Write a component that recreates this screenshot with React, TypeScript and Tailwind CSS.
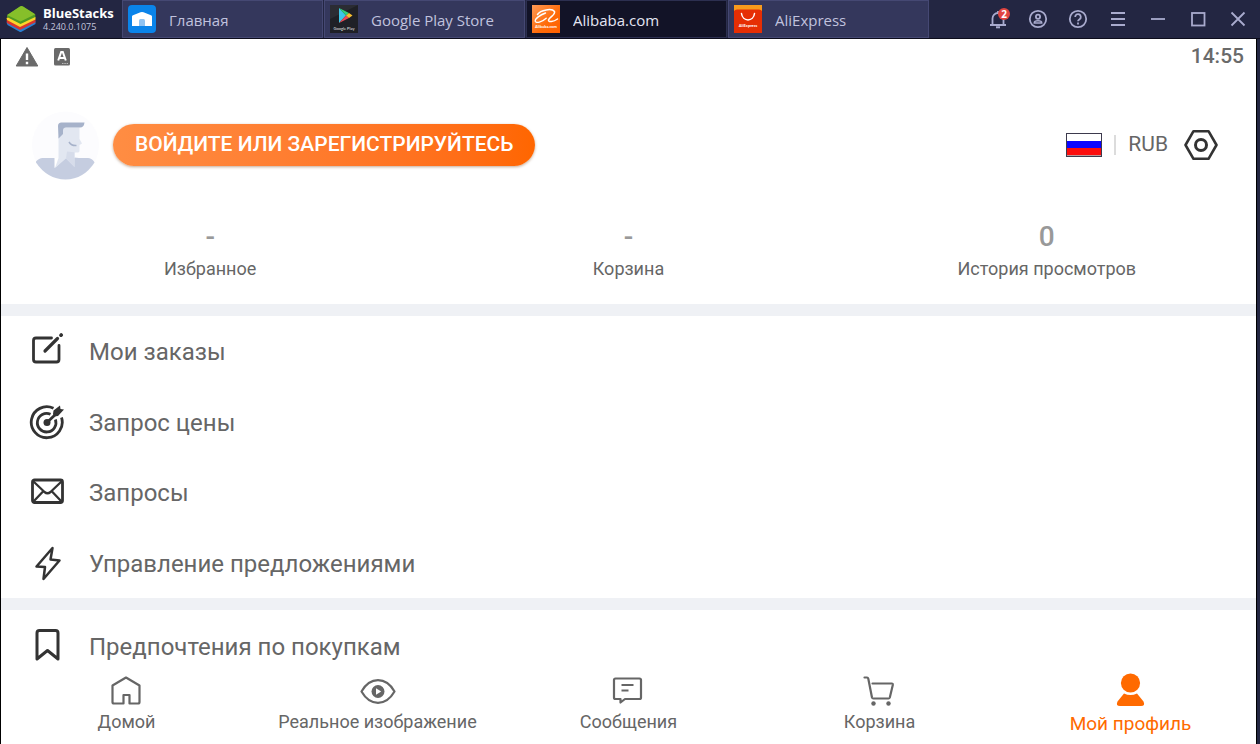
import React from "react";

type IconProps = { className?: string };

function BlueStacksLogo() {
  return (
    <svg viewBox="0 0 30 28" className="h-7 w-[30px] shrink-0" aria-hidden="true">
      <path d="M0.5 17.500 15 10l14.500 6.500v2.500L15.500 26.800q-1 .5-2 0L1.500 20z" fill="#2b7fd0" />
      <path d="M0.5 15.500 15 8l14.500 6.500v2.700L14 25 1 18z" fill="#d8352e" />
      <path d="M0.5 13 15 6l14.500 6v2.400L14 22 1 15z" fill="#fbd52c" />
      <path d="M1 10.500 14 1.500q1.500-.9 3 0L29.300 9.500v2.500L14.500 19 1 12z" fill="#4f9a22" />
      <path d="M1 10 14 1.500q1.500-.9 3 0L29.300 9.200 14.500 16.500z" fill="#86bf2a" />
    </svg>
  );
}

function HomeAppIcon() {
  return (
    <svg viewBox="0 0 28 28" className="size-7" aria-hidden="true">
      <rect width="28" height="28" rx="4" fill="#0a84ea" />
      <path d="M4 11.500Q4 10.500 5 10.200L12.500 7.300Q14 6.800 15.500 7.300L23 10.200Q24 10.500 24 11.500V21H4z" fill="#fff" />
      <path d="M11 15.500q0-1.500 1.500-1.500h3q1.500 0 1.500 1.500V21h-6z" fill="#8fc3f2" />
    </svg>
  );
}

function PlayAppIcon() {
  return (
    <svg viewBox="0 0 28 28" className="size-7" aria-hidden="true">
      <rect width="28" height="28" fill="#2b2c33" />
      <path d="M0 14 28 0v28H0z" fill="#1f2026" />
      <path d="M9 3v15l7-7.500z" fill="#3ec6e8" />
      <path d="M9 3l10 5-3 2.500z" fill="#33d17a" />
      <path d="M9 18l10-5-3-2.500z" fill="#ef4a55" />
      <path d="M19 8l3.500 2.500L19 13l-3-2.500z" fill="#fbc02d" />
      <text x="14" y="24.500" textAnchor="middle" fontSize="4" fill="#e5e5e5" fontFamily="Lato, sans-serif">Google Play</text>
    </svg>
  );
}

function AlibabaAppIcon() {
  return (
    <svg viewBox="0 0 28 28" className="size-7" aria-hidden="true">
      <defs>
        <linearGradient id="alibaba" x1="0" y1="0" x2="1" y2="1">
          <stop offset="0" stopColor="#ff9a55" />
          <stop offset="0.600" stopColor="#ff6a08" />
          <stop offset="1" stopColor="#ff6000" />
        </linearGradient>
      </defs>
      <rect width="28" height="28" fill="url(#alibaba)" />
      <path d="M5.500 9.500C8.500 4.800 20 3 22.500 6.500c1 3.500-4.500 5-6 8.500-.5 2.500 5 2 9-1" fill="none" stroke="#fff" strokeWidth="1.500" strokeLinecap="round" />
      <path d="M13.500 8C8 10 3 13.500 3.200 16.200c.5 2.500 7 .8 11-3" fill="none" stroke="#fff" strokeWidth="1.400" strokeLinecap="round" />
      <text x="14" y="23" textAnchor="middle" fontSize="4" fontWeight="700" fill="#fff" fontFamily="Lato, sans-serif">Alibaba.com</text>
    </svg>
  );
}

function AliExpressAppIcon() {
  return (
    <svg viewBox="0 0 28 28" className="size-7" aria-hidden="true">
      <rect width="28" height="28" fill="#e62e04" />
      <path d="M0 0h28v6q-1-1.500-3-1.500H3Q1 4.500 0 6z" fill="#f79a1d" />
      <path d="M7.500 8.500c1 8.500 12 8.500 13 0" fill="none" stroke="#fff" strokeWidth="1.500" strokeLinecap="round" />
      <text x="14" y="22" textAnchor="middle" fontSize="4" fontWeight="700" fill="#fff" fontFamily="Lato, sans-serif">AliExpress</text>
    </svg>
  );
}

const windowIcon = "size-5 fill-none stroke-[#a9abce] stroke-[1.8]";

function BellIcon() {
  return (
    <svg viewBox="0 0 20 20" className={windowIcon} aria-hidden="true">
      <path d="M2 16h16M4.500 16V9.500a5.500 5.500 0 0 1 11 0V16M10 2v2" />
      <path d="M8 18.300h4" strokeWidth="2" />
    </svg>
  );
}

function AccountIcon() {
  return (
    <svg viewBox="0 0 20 20" className={windowIcon} aria-hidden="true">
      <circle cx="10" cy="10" r="8.200" />
      <circle cx="10" cy="7.700" r="2.100" />
      <path d="M6.300 14v-.4c0-1.400 1.600-1.800 3.700-1.800s3.700.4 3.700 1.800v.4z" strokeWidth="1.500" />
    </svg>
  );
}

function HelpIcon() {
  return (
    <svg viewBox="0 0 20 20" className={windowIcon} aria-hidden="true">
      <circle cx="10" cy="10" r="8.200" />
      <path d="M7.200 8a2.800 2.800 0 1 1 4.400 2.200c-1 .7-1.600 1-1.600 2.100" />
      <path d="M10 13.600v2" />
    </svg>
  );
}

function MenuIcon() {
  return (
    <svg viewBox="0 0 20 20" className={windowIcon} aria-hidden="true">
      <path d="M3 4h14M3 10h14M3 16h14" />
    </svg>
  );
}

function MinimizeIcon() {
  return (
    <svg viewBox="0 0 20 20" className={windowIcon} aria-hidden="true">
      <path d="M3 10h14" />
    </svg>
  );
}

function MaximizeIcon() {
  return (
    <svg viewBox="0 0 20 20" className={windowIcon} aria-hidden="true">
      <rect x="4" y="4" width="12.500" height="12.500" />
    </svg>
  );
}

function CloseIcon() {
  return (
    <svg viewBox="0 0 20 20" className={windowIcon} aria-hidden="true">
      <path d="M3.500 3.500l13 13M16.500 3.500l-13 13" />
    </svg>
  );
}

function WarningIcon() {
  return (
    <svg viewBox="0 0 24 24" className="size-6" aria-hidden="true">
      <path d="M12 2.500l10.800 18.500H1.200z" fill="#6a6a6a" stroke="#6a6a6a" strokeLinejoin="round" />
      <path d="M12 8.500v6.500M12 16.800v2.500" stroke="#fff" strokeWidth="2.400" />
    </svg>
  );
}

function KeyboardIcon() {
  return (
    <svg viewBox="0 0 18 20" className="h-5 w-[18px]" aria-hidden="true">
      <rect x="1" y="1" width="16" height="17.500" rx="1.500" fill="#6a6a6a" />
      <path d="M5.200 13.500 8.200 5h1.600l3 8.500M6.300 11h5.400" fill="none" stroke="#fff" strokeWidth="2" />
      <path d="M9 16.500h6" stroke="#bbb" strokeDasharray="1.500 .8" />
    </svg>
  );
}

function Avatar() {
  return (
    <svg viewBox="0 0 70 72" className="h-[72px] w-[70px] shrink-0" aria-hidden="true">
      <circle cx="34.500" cy="36" r="33.500" fill="#fcfcfe" />
      <path d="M5 52.500q3-3.500 6.500-3.500h45.500q3.500 0 6 3.500l.5 1Q53 70 34.500 70.500 16 70 5 53.500z" fill="#c5cde0" />
      <path d="M23.500 49H29l-1 6-4.500 4z" fill="#fff" />
      <path d="M43.500 48.500v10L48 49z" fill="#c5cde0" />
      <path d="M27.500 28 32 18.500h16.500V30l2.500 4.500-2.500 1.500v6q0 1.500-2 1.500H43.500V58L35 49.500 24 59l3.500-10z" fill="#e2e7f1" />
      <path d="M36 42.500l9 1h-1.500V58L35 49.500z" fill="#d6dcea" />
      <path d="M27 17q0-3.500 3.500-3.500h23q-.5 5-4.500 5H35q-3 0-3 3v3.500L27.500 29.500z" fill="#a6b2ca" />
      <path d="M38 33q2.500 4 7.500 3.500" fill="none" stroke="#a6b2ca" strokeWidth="1.500" />
    </svg>
  );
}

function RussiaFlag() {
  return (
    <svg viewBox="0 0 36 24" className="h-6 w-9" role="img" aria-label="Россия">
      <rect width="36" height="24" fill="#fff" />
      <rect y="8" width="36" height="7" fill="#0a05ff" />
      <rect y="15" width="36" height="7" fill="#fb0d0d" />
      <rect y="22" width="36" height="1" fill="#b99" />
      <rect x="0.500" y="0.500" width="35" height="23" fill="none" stroke="#3d3a4d" />
    </svg>
  );
}

function SettingsIcon() {
  return (
    <svg viewBox="0 0 34 32" className="h-8 w-[34px] fill-none stroke-[#333] stroke-[2.6]" aria-hidden="true">
      <path strokeLinejoin="round" d="M9.500 2.200h15L32.500 16l-8 13.800h-15L1.500 16z" />
      <circle cx="17" cy="16" r="5.500" strokeWidth="3" />
    </svg>
  );
}

const rowIcon = "size-9 shrink-0 fill-none stroke-[#333] stroke-[2.8]";

function OrdersIcon() {
  return (
    <svg viewBox="0 0 36 36" className={rowIcon} strokeLinecap="round" strokeLinejoin="round" aria-hidden="true">
      <path d="M22.500 5H7Q4.500 5 4.500 7.500v19Q4.500 29 7 29h20.500q2.500 0 2.500-2.500V12.500" />
      <path d="M16 18 28.500 5.500" strokeWidth="3.200" />
      <path d="M32 2.200l.2-.2" strokeWidth="3.600" />
    </svg>
  );
}

function QuoteIcon() {
  return (
    <svg viewBox="0 0 36 36" className={rowIcon} aria-hidden="true">
      <path d="M24.500 4.300A15.500 15.500 0 1 0 32.500 13.500" />
      <path d="M21.500 10.200A9.300 9.300 0 1 0 26.400 15.500" />
      <circle cx="18" cy="18.500" r="3.500" fill="#333" stroke="none" />
      <path d="M18 18.500l10-9.500" strokeWidth="2.800" />
      <path d="M24 10l.5-3.500L31 1.500l.5 3.500 3.500.5-6 6.500-4 .5z" fill="#333" stroke="none" />
    </svg>
  );
}

function InquiryIcon() {
  return (
    <svg viewBox="0 0 36 36" className={rowIcon} strokeLinejoin="round" aria-hidden="true">
      <rect x="3.500" y="6" width="30" height="22.500" rx="2" />
      <path d="M4.500 7.500 15.500 18q3 2.500 6 0L32.500 7.500M4.500 27.500l9.500-10M32.500 27.500l-9.500-10" strokeWidth="2.300" />
    </svg>
  );
}

function LightningIcon() {
  return (
    <svg viewBox="0 0 36 36" className={rowIcon} strokeLinejoin="round" aria-hidden="true">
      <path d="M23.500 3 7.500 21.500l8.500.5-1.500 12L30.500 15.500 21.500 14.500z" strokeWidth="2.500" />
    </svg>
  );
}

function BookmarkIcon() {
  return (
    <svg viewBox="0 0 36 36" className={rowIcon} strokeLinejoin="round" aria-hidden="true">
      <path d="M8 31V5q0-2.500 2.500-2.500h16Q29 2.500 29 5v26l-10.500-8.500z" strokeWidth="3" />
    </svg>
  );
}

const navIcon = "size-9 fill-none stroke-[#666] stroke-[2.2]";

function HouseIcon() {
  return (
    <svg viewBox="0 0 36 36" className={navIcon} strokeLinejoin="round" aria-hidden="true">
      <path d="M3.500 12.500 17 4.500l13.500 8V29q0 1.500-1.500 1.500h-8.500V22h-6v8.500H5q-1.500 0-1.500-1.500z" />
    </svg>
  );
}

function EyePlayIcon() {
  return (
    <svg viewBox="0 0 36 36" className={navIcon} strokeLinejoin="round" aria-hidden="true">
      <path d="M1.500 18.500Q8 7.200 18 7.200t16.500 11.300Q28 29.800 18 29.800T1.500 18.500z" />
      <circle cx="18" cy="18.500" r="6.500" fill="#666" stroke="none" />
      <path d="M16 15.200v6.600l5.200-3.300z" fill="#fff" stroke="none" />
    </svg>
  );
}

function MessageIcon() {
  return (
    <svg viewBox="0 0 36 36" className={navIcon} strokeLinejoin="round" aria-hidden="true">
      <path d="M4.500 5.500h24q1.500 0 1.500 1.500v17.500q0 1.500-1.500 1.500H14L9.500 29.500V26h-5q-1.500 0-1.500-1.500V7q0-1.500 1.500-1.500z" />
      <path d="M10.500 12h12M10.500 17.500h7" />
    </svg>
  );
}

function CartIcon() {
  return (
    <svg viewBox="0 0 36 36" className={navIcon} strokeLinecap="round" strokeLinejoin="round" aria-hidden="true">
      <path d="M2.500 4.500h2.500q1 0 1.300 1.200L10 24.500q.3 1 1.300 1h15.200q1 0 1.300-1l3-12.500q.2-1.500-1-1.500H10.500" />
      <circle cx="11.500" cy="30.500" r="2.200" fill="#666" stroke="none" />
      <circle cx="26.500" cy="30.500" r="2.200" fill="#666" stroke="none" />
    </svg>
  );
}

function ProfileIcon() {
  return (
    <svg viewBox="0 0 36 36" className="size-9 fill-[#ff6a00]" aria-hidden="true">
      <circle cx="17.500" cy="10" r="9.600" />
      <path d="M11 20.500q6.500 3.200 13 0l6.500 8q2 4.500-2.500 4.500H7Q2.500 33 4.500 28.500z" />
    </svg>
  );
}

const tabs = [
  { label: "Главная", Icon: HomeAppIcon, active: false },
  { label: "Google Play Store", Icon: PlayAppIcon, active: false },
  { label: "Alibaba.com", Icon: AlibabaAppIcon, active: true },
  { label: "AliExpress", Icon: AliExpressAppIcon, active: false },
];

const windowButtons = [
  { label: "Уведомления", Icon: BellIcon, badge: "2" },
  { label: "Аккаунт", Icon: AccountIcon },
  { label: "Справка", Icon: HelpIcon },
  { label: "Меню", Icon: MenuIcon },
  { label: "Свернуть", Icon: MinimizeIcon },
  { label: "Развернуть", Icon: MaximizeIcon },
  { label: "Закрыть", Icon: CloseIcon },
];

const stats = [
  { value: "-", label: "Избранное" },
  { value: "-", label: "Корзина" },
  { value: "0", label: "История просмотров" },
];

const menuRows = [
  { label: "Мои заказы", Icon: OrdersIcon },
  { label: "Запрос цены", Icon: QuoteIcon },
  { label: "Запросы", Icon: InquiryIcon },
  { label: "Управление предложениями", Icon: LightningIcon },
];

const navItems = [
  { label: "Домой", Icon: HouseIcon },
  { label: "Реальное изображение", Icon: EyePlayIcon },
  { label: "Сообщения", Icon: MessageIcon },
  { label: "Корзина", Icon: CartIcon },
];

function TitleBar() {
  return (
    <header className="flex h-[39px] shrink-0 border-b border-[#0d0d1c] bg-[#232642] font-['Open_Sans','Noto_Sans',sans-serif]">
      <div className="flex w-[122px] shrink-0 items-center gap-[7px] pl-1.5">
        <BlueStacksLogo />
        <div className="flex flex-col">
          <span className="text-[13px] leading-4 font-bold text-white">BlueStacks</span>
          <span className="text-[9px] leading-3 text-[#c3c5de]">4.240.0.1075</span>
        </div>
      </div>
      <div role="tablist" className="flex min-w-0 flex-1 gap-px">
        {tabs.map(({ label, Icon, active }) => (
          <button
            key={label}
            role="tab"
            aria-selected={active}
            className={
              active
                ? "flex w-[201px] items-center gap-[13px] border border-[#2c2f50] bg-[#121327] pl-[5px] text-left text-[15px] text-[#e4e5f2]"
                : "flex w-[201px] items-center gap-[13px] border border-[#454873] bg-[#34375c] pl-[5px] text-left text-[15px] text-[#c0c2de]"
            }
          >
            <Icon />
            <span className="truncate pt-0.5">{label}</span>
          </button>
        ))}
      </div>
      <div className="flex shrink-0 pr-0.5">
        {windowButtons.map(({ label, Icon, badge }) => (
          <button key={label} aria-label={label} className="relative flex w-10 items-center justify-center">
            <Icon />
            {badge && (
              <span className="absolute top-2 left-5 flex size-3 items-center justify-center rounded-full bg-[#e04540] text-[10px] leading-3 font-bold text-white">
                {badge}
              </span>
            )}
          </button>
        ))}
      </div>
    </header>
  );
}

function MenuRow({ label, Icon }: { label: string; Icon: React.ComponentType<IconProps> }) {
  return (
    <a href="#" className="flex items-center gap-6 pl-7 text-2xl text-[#666]">
      <Icon />
      <span className="pt-0.5">{label}</span>
    </a>
  );
}

export default function App() {
  return (
    <div className="flex h-screen flex-col bg-[#232642] font-[Roboto,sans-serif]">
      <TitleBar />
      <div className="mr-[3px] flex min-h-0 flex-1 flex-col border-x border-black bg-white">
        <main className="min-h-0 flex-1 overflow-hidden">
          <div className="flex h-9 items-center justify-between pr-3 pl-3.5">
            <div className="flex items-center gap-3.5">
              <WarningIcon />
              <KeyboardIcon />
            </div>
            <time className="text-[21px] font-medium text-[#6a6a6a]">14:55</time>
          </div>

          <section className="flex h-[140px] items-center justify-between pr-[38px] pl-[30px]">
            <div className="flex items-center gap-3">
              <Avatar />
              <button className="h-[42px] rounded-full bg-linear-to-r from-[#ff8d43] to-[#ff6600] px-[22px] text-[21px] font-medium text-white shadow-[0_1px_3px_rgba(120,60,10,0.45)]">
                ВОЙДИТЕ ИЛИ ЗАРЕГИСТРИРУЙТЕСЬ
              </button>
            </div>
            <div className="flex items-center">
              <button className="flex items-center gap-3 text-[21px] text-[#666]">
                <RussiaFlag />
                <span className="h-5 border-l-2 border-[#dcdcdc]" />
                <span>RUB</span>
              </button>
              <button aria-label="Настройки" className="ml-4">
                <SettingsIcon />
              </button>
            </div>
          </section>

          <section className="grid h-[89px] grid-cols-3 text-center">
            {stats.map((stat) => (
              <div key={stat.label} className="flex flex-col pt-1">
                <span className="text-[28px] leading-9 font-medium text-[#999]">{stat.value}</span>
                <span className="text-lg leading-7 text-[#666]">{stat.label}</span>
              </div>
            ))}
          </section>

          <nav className="grid h-[306px] grid-rows-4 border-y-12 border-[#eff1f5]">
            {menuRows.map((row) => (
              <MenuRow key={row.label} {...row} />
            ))}
          </nav>

          <div className="grid h-[71px]">
            <MenuRow label="Предпочтения по покупкам" Icon={BookmarkIcon} />
          </div>
        </main>

        <nav className="grid h-[77px] shrink-0 grid-cols-5 bg-white text-lg text-[#666]">
          {navItems.map(({ label, Icon }) => (
            <a key={label} href="#" className="flex flex-col items-center pt-1.5">
              <Icon />
              <span className="leading-[26px]">{label}</span>
            </a>
          ))}
          <a href="#" aria-current="page" className="flex flex-col items-center pt-1.5 text-[19px] text-[#ff6a00]">
            <ProfileIcon />
            <span className="leading-[30px]">Мой профиль</span>
          </a>
        </nav>
      </div>
    </div>
  );
}
